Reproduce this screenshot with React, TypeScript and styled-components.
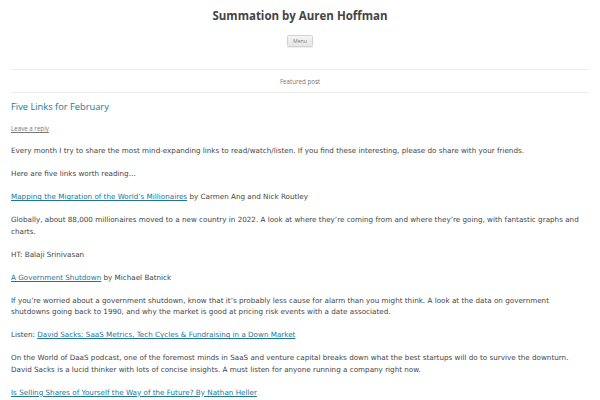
import * as React from 'react';
import styled, { createGlobalStyle } from 'styled-components';

const GlobalStyle = createGlobalStyle`
	html, body {
		margin: 0;
		padding: 0;
		background: #fff;
	}
	body {
		font-family: 'Open Sans', 'Liberation Sans', sans-serif;
		color: #444;
	}
`;

const Page = styled.div`
	padding: 0 11px;
`;

const Header = styled.header`
	display: flex;
	flex-direction: column;
	align-items: center;
	padding: 10px 0 22px;
`;

const SiteTitle = styled.h1`
	margin: 0;
	font-size: 11.5px;
	line-height: 12px;
	font-weight: 700;
	color: #444;
`;

const MenuToggle = styled.button`
	margin-top: 13px;
	height: 12px;
	padding: 0 5px;
	font-family: inherit;
	font-size: 5.3px;
	line-height: 10px;
	color: #7c7c7c;
	background: linear-gradient(to bottom, #f4f4f4, #e6e6e6);
	border: 1px solid #d2d2d2;
	border-radius: 1.5px;
	box-shadow: 0 0.5px 1px rgba(64, 64, 64, 0.1);
`;

const Featured = styled.div`
	height: 22px;
	display: flex;
	align-items: center;
	justify-content: center;
	border-top: 1px solid #ededed;
	border-bottom: 1px solid #ededed;
	font-size: 6.2px;
	color: #757575;
`;

const Entry = styled.article`
	padding-top: 8px;
`;

const EntryTitle = styled.h2`
	margin: 0;
	font-size: 9.3px;
	line-height: 12px;
	font-weight: 400;

	a {
		color: #21759b;
		text-decoration: none;
	}
`;

const ReplyLink = styled.a`
	display: block;
	margin-top: 11px;
	font-size: 6.2px;
	line-height: 10px;
	color: #777;
	text-decoration: underline;
`;

const Content = styled.div`
	margin-top: 11px;
	font-family: 'DejaVu Sans', 'Open Sans', sans-serif;
	font-size: 7.2px;
	line-height: 11.5px;
	color: #444;

	p {
		margin: 0 0 11.5px;
	}

	a {
		color: #21759b;
		text-decoration: underline;
	}
`;

export default function App() {
	return (
		<>
			<GlobalStyle />
			<Page>
				<Header>
					<SiteTitle>Summation by Auren Hoffman</SiteTitle>
					<MenuToggle>Menu</MenuToggle>
				</Header>
				<Featured>Featured post</Featured>
				<Entry>
					<EntryTitle>
						<a href="#">Five Links for February</a>
					</EntryTitle>
					<ReplyLink href="#">Leave a reply</ReplyLink>
					<Content>
						<p>
							Every month I try to share the most mind-expanding links to read/watch/listen. If you find these
							interesting, please do share with your friends.
						</p>
						<p>Here are five links worth reading…</p>
						<p>
							<a href="#">Mapping the Migration of the World’s Millionaires</a> by Carmen Ang and Nick Routley
						</p>
						<p>
							Globally, about 88,000 millionaires moved to a new country in 2022. A look at where they’re coming from
							and where they’re going, with fantastic graphs and charts.
						</p>
						<p>HT: Balaji Srinivasan</p>
						<p>
							<a href="#">A Government Shutdown</a> by Michael Batnick
						</p>
						<p>
							If you’re worried about a government shutdown, know that it’s probably less cause for alarm than you
							might think. A look at the data on government shutdowns going back to 1990, and why the market is good
							at pricing risk events with a date associated.
						</p>
						<p>
							Listen: <a href="#">David Sacks: SaaS Metrics, Tech Cycles &amp; Fundraising in a Down Market</a>
						</p>
						<p>
							On the World of DaaS podcast, one of the foremost minds in SaaS and venture capital breaks down what the
							best startups will do to survive the downturn. David Sacks is a lucid thinker with lots of concise
							insights. A must listen for anyone running a company right now.
						</p>
						<p>
							<a href="#">Is Selling Shares of Yourself the Way of the Future? By Nathan Heller</a>
						</p>
					</Content>
				</Entry>
			</Page>
		</>
	);
}
